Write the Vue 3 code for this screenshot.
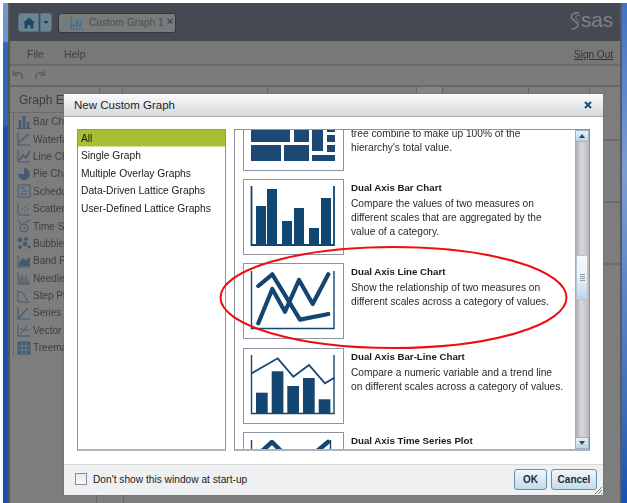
<script setup>
const elements = [
  { name: 'Bar Chart', kind: 'bar' }, { name: 'Waterfall Chart', kind: 'water' },
  { name: 'Line Chart', kind: 'line' }, { name: 'Pie Chart', kind: 'pie' },
  { name: 'Schedule Chart', kind: 'sched' }, { name: 'Scatter Plot', kind: 'scatter' },
  { name: 'Time Series Plot', kind: 'time' }, { name: 'Bubble Plot', kind: 'bubble' },
  { name: 'Band Plot', kind: 'band' }, { name: 'Needle Plot', kind: 'needle' },
  { name: 'Step Plot', kind: 'step' }, { name: 'Series Plot', kind: 'series' },
  { name: 'Vector Plot', kind: 'vector' }, { name: 'Treemap', kind: 'tree' },
]
const categories = ['All', 'Single Graph', 'Multiple Overlay Graphs', 'Data-Driven Lattice Graphs', 'User-Defined Lattice Graphs']
const treeRects = [[0,0,39,12],[43,0,15,12],[61,0,11,21],[76,0,8,2],[76,5,8,7],[76,15,8,7],[0,15,30,16],[33,15,25,16],[61,25,23,6]]
const barRects = [[6,20],[17,3],[32,35],[44,22],[59,42],[71,12]]
const comboRects = [[6,37.7],[21.7,16.3],[37.3,31],[53,23],[68.7,44.3]]
</script>

<template>
  <div class="screen">
    <div class="edge-left"></div>
    <div class="app">
      <header class="masthead">
        <div class="home-group">
          <button class="home-btn">
            <svg width="12" height="12" viewBox="0 0 12 12"><path d="M6 .5 0 6h1.6v5.5h3V8h2.800v3.500h3V6H12z" fill="#1c4464"/></svg>
          </button>
          <button class="home-arrow"><span class="caret"></span></button>
        </div>
        <div class="doc-tab">
          <svg width="14" height="14" viewBox="0 0 14 14" fill="none" stroke="#3f6d96">
            <path d="M1 1v12h12" stroke-width="1.2"/>
            <path d="M4 11V8M7 11V4M10 11V6" stroke-width="2"/>
          </svg>
          <span>Custom Graph 1</span>
          <b>×</b>
        </div>
        <div class="logo">
          <svg width="11" height="18" viewBox="0 0 11 18" fill="none" stroke="#7f848a">
            <path d="M9 1C4 0 0 3 2 6.500L7.500 11.500C9 14 6.500 17 1.500 17" stroke-width="1.400"/>
            <path d="M10 3.500C7 3 5 4.500 6 6.500L9.500 10.500" stroke-width="1"/>
          </svg>
          <span>sas</span>
        </div>
      </header>
      <nav class="menubar">
        <span>File</span><span>Help</span>
        <a>Sign Out</a>
      </nav>
      <div class="toolbar">
        <svg width="34" height="12" viewBox="0 0 34 12" fill="none" stroke="#5e5e5e" stroke-width="1.500">
          <path d="M10 10C11.500 4 6 2 2 5M1.500 1.500v4.500H6"/>
          <path d="M24 10C22.500 4 28 2 32 5M32.500 1.500v4.500H28"/>
        </svg>
      </div>
      <div class="workspace">
        <div class="ticks"><i></i><i></i><i></i><i></i><i class="lit"></i><i></i><i></i></div>
        <div class="work-main">
          <aside class="elements">
            <div class="elements-title">Graph Elements</div>
            <ul class="element-list">
              <li v-for="el in elements" :key="el.name">
                <svg width="14" height="14" viewBox="0 0 14 14" fill="none" stroke="#435a70">
                  <template v-if="el.kind === 'bar'"><path d="M3 13V5M7 13V1M11 13V7" stroke-width="2.600"/><path d="M0 13.500h14" /></template>
                  <template v-else-if="el.kind === 'water'"><path d="M1 1v12h12M3 11V8h3V6h3V3h3" stroke-width="1.100"/></template>
                  <template v-else-if="el.kind === 'line'"><path d="M1 1v12h12" /><path d="M2.500 11 6 6l3 3 4-7" stroke-width="1.600"/></template>
                  <template v-else-if="el.kind === 'pie'"><path d="M7 7V1a6 6 0 1 1-6 6z" fill="#435a70" stroke="none"/><path d="M7 7 2 3" stroke="#7b7b7b"/></template>
                  <template v-else-if="el.kind === 'sched'"><path d="M1 1h12v12H1zM3 4h5M5 7h5M3 10h7"/></template>
                  <template v-else-if="el.kind === 'scatter'"><path d="M1 1v12h12"/><path d="M3 10h1M5 7h1M7 9h1M8 5h1M10 7h1M11 3h1" stroke-width="1.400"/></template>
                  <template v-else-if="el.kind === 'time'"><circle cx="7" cy="9" r="4"/><path d="M1 1l4 5 3-3 5-2M7 7v2h2"/></template>
                  <template v-else-if="el.kind === 'bubble'"><circle cx="3" cy="4" r="2" fill="#435a70"/><circle cx="9" cy="3" r="1.500" fill="#435a70"/><circle cx="8" cy="8" r="2" fill="#435a70"/><circle cx="3" cy="11" r="1.500" fill="#435a70"/><circle cx="12" cy="11" r="1.200" fill="#435a70"/></template>
                  <template v-else-if="el.kind === 'band'"><path d="M1 1v12h12"/><path d="M2 12V8l4-4 3 2 4-3v9z" fill="#435a70" stroke="none"/></template>
                  <template v-else-if="el.kind === 'needle'"><path d="M1 1v12h12M3 13V6M5 13V3M7 13V7M9 13V4M11 13V8"/></template>
                  <template v-else-if="el.kind === 'step'"><path d="M1 1v12h12M2 3h3l6 9"/></template>
                  <template v-else-if="el.kind === 'series'"><path d="M1 1v12h12M2 12l9-10" stroke-width="1.200"/></template>
                  <template v-else-if="el.kind === 'vector'"><path d="M1 1v12h12M3 11l4-4M7 7h5M7 7l3-5M3 5l3 2"/></template>
                  <template v-else><path d="M1 1h12v12H1z" fill="#435a70"/><path d="M1 5h12M1 9h12M5 1v12M9 1v12" stroke="#70808c"/></template>
                </svg>
                <span>{{ el.name }}</span>
              </li>
            </ul>
          </aside>
          <div class="canvas-strip">
            <span class="strip-rule"></span><span class="strip-rule"></span><span class="strip-rule"></span>
          </div>
        </div>
        <div class="ticks low"><i></i><i></i></div>
      </div>
    </div>
    <div class="edge-right"></div>

    <section class="dialog">
      <div class="dialog-title">
        <span>New Custom Graph</span>
        <svg class="close" width="8" height="8" viewBox="0 0 8 8"><path d="M1 1l6 6M7 1 1 7" stroke="#1e4d7b" stroke-width="2"/></svg>
      </div>
      <div class="dialog-body">
        <ul class="categories">
          <li v-for="(c, i) in categories" :key="c" :class="{ selected: i === 0 }">{{ c }}</li>
        </ul>
        <div class="gallery">
          <div class="gallery-view">
            <article class="card first">
              <div class="thumb">
                <svg width="84" height="31" viewBox="0 0 84 31" fill="#1c4a75">
                  <rect v-for="(r, i) in treeRects" :key="i" :x="r[0]" :y="r[1]" :width="r[2]" :height="r[3]"/>
                </svg>
              </div>
              <div class="info">
                <p>tree combine to make up 100% of the hierarchy's total value.</p>
              </div>
            </article>
            <article class="card">
              <div class="thumb">
                <svg width="87" height="60" viewBox="0 0 87 60" fill="#0f4672">
                  <path d="M1.500 0v59H84V0" fill="none" stroke="#0f4672" stroke-width="1.800"/>
                  <rect v-for="(r, i) in barRects" :key="i" :x="r[0]" :y="r[1]" width="10" :height="59 - r[1]"/>
                </svg>
              </div>
              <div class="info">
                <h3>Dual Axis Bar Chart</h3>
                <p>Compare the values of two measures on different scales that are aggregated by the value of a category.</p>
              </div>
            </article>
            <article class="card">
              <div class="thumb">
                <svg width="87" height="60" viewBox="0 0 87 60" fill="none" stroke="#154672">
                  <path d="M1.500 1v57.500H84V1" stroke-width="1.400"/>
                  <path d="M8.300 16 22.300 4.300 50 49.600 78.300 44" stroke-width="4.200" stroke-linecap="round" stroke-linejoin="round"/>
                  <path d="M8.300 53.300 22.300 19 35 41.700 49 10 62.700 34 78.300 4.300" stroke-width="4.200" stroke-linecap="round" stroke-linejoin="round"/>
                </svg>
              </div>
              <div class="info">
                <h3>Dual Axis Line Chart</h3>
                <p>Show the relationship of two measures on different scales across a category of values.</p>
              </div>
            </article>
            <article class="card">
              <div class="thumb">
                <svg width="87" height="60" viewBox="0 0 87 60" fill="#154672">
                  <path d="M1.500 0v58.500H84V0" fill="none" stroke="#154672" stroke-width="1.400"/>
                  <path d="M1.700 18.300 27.700 3.300 43.300 21.700 59 10 75 28.300 84.300 22.700" fill="none" stroke="#154672" stroke-width="1.800"/>
                  <rect v-for="(r, i) in comboRects" :key="i" :x="r[0]" :y="r[1]" width="11.700" :height="58 - r[1]"/>
                </svg>
              </div>
              <div class="info">
                <h3>Dual Axis Bar-Line Chart</h3>
                <p>Compare a numeric variable and a trend line on different scales across a category of values.</p>
              </div>
            </article>
            <article class="card">
              <div class="thumb">
                <svg width="87" height="60" viewBox="0 0 87 60" fill="none" stroke="#154672">
                  <path d="M1.500 1v58M80.500 1v58" stroke-width="1.400"/>
                  <path d="M10 14 22 3 33 14M66 13l12-10" stroke-width="4.500" stroke-linecap="round" stroke-linejoin="round"/>
                </svg>
              </div>
              <div class="info">
                <h3>Dual Axis Time Series Plot</h3>
              </div>
            </article>
          </div>
          <div class="scrollbar">
            <button class="sb-btn"><span class="tri up"></span></button>
            <div class="sb-track">
              <div class="sb-thumb"><span></span></div>
            </div>
            <button class="sb-btn"><span class="tri down"></span></button>
          </div>
        </div>
      </div>
      <footer class="dialog-foot">
        <label class="check"><span class="box"></span>Don't show this window at start-up</label>
        <div class="actions">
          <button class="btn ok">OK</button>
          <button class="btn">Cancel</button>
        </div>
        <svg class="grip" width="7" height="7" viewBox="0 0 7 7"><path d="M0 7 7 0M3 7l4-4M6 7l1-1" stroke="#777"/></svg>
      </footer>
    </section>

    <svg class="annotation" width="627" height="503" viewBox="0 0 627 503" fill="none">
      <ellipse cx="393.500" cy="297.500" rx="173" ry="50.500" stroke="#ee0d12" stroke-width="2"/>
    </svg>
  </div>
</template>

<style>
html, body { margin: 0; background: #fff; }
</style>

<style scoped>
* { box-sizing: border-box; }
.screen {
  position: relative; width: 627px; height: 503px; overflow: hidden; background: #fff;
  display: flex; padding-left: 3px; padding-top: 3px;
  font-family: "Liberation Sans", Arial, sans-serif; font-size: 10.2px; color: #222;
}
.edge-left {
  width: 5px; height: 500px; flex: none;
  background: linear-gradient(#7396cf, #6f93cd 38px, #2c66bd 40px, #2c66bd 122px, #1552b4 124px, #1552b4);
}
.edge-right {
  width: 5px; height: 500px; flex: none;
  background: linear-gradient(#3f72c4, #7c9dd3 170px, #3f6fbc 400px, #1552b4);
}
.app {
  flex: 1; min-width: 0; display: flex; flex-direction: column; filter: blur(.45px);
  border-left: 2px solid #555; border-right: 2px solid #5a5a5a;
}
.masthead {
  height: 38px; background: #454a52; display: flex; align-items: center; padding: 0 7px 0 8px; flex: none;
}
.home-group { display: flex; gap: 1px; margin-right: 6px; margin-top: 1px; }
.home-btn, .home-arrow {
  height: 19px; border: 1px solid #58707f; background: #6b8493; padding: 0;
  display: flex; align-items: center; justify-content: center;
}
.home-btn { width: 21px; border-radius: 3px 0 0 3px; }
.home-arrow { width: 12px; border-radius: 0 3px 3px 0; }
.caret { border: 3px solid transparent; border-top: 3px solid #1c4464; border-bottom: 0; }
.doc-tab {
  height: 20px; width: 118px; border: 1px solid #35383d; border-radius: 3px; background: #787b7c;
  display: flex; align-items: center; gap: 5px; padding-left: 11px; color: #4b4f52; font-size: 10.2px; margin-top: 1px;
}
.doc-tab b { color: #274e70; font-size: 11px; margin-left: -2px; margin-top: -3px; }
.logo {
  margin-left: auto; color: #7f848a; font-size: 21px; letter-spacing: -.2px; line-height: 1;
  display: flex; align-items: center; margin-top: -2px;
}
.logo span { margin-top: -3px; }
.menubar {
  height: 25px; background: #787878; flex: none; display: flex; align-items: center; gap: 20px;
  padding: 3px 7px 0 17px; color: #3f3f3f; border-bottom: 2px solid #6a6a6a; font-size: 10.5px;
}
.menubar a { margin-left: auto; text-decoration: underline; color: #333; font-size: 10px; }
.toolbar {
  height: 21px; background: #7c7c7c; flex: none; border-bottom: 2px solid #686868;
  padding: 3px 0 0 2px; display: flex;
}
.workspace { flex: 1; min-height: 0; display: flex; flex-direction: column; background: #7d7d7d; }
.ticks { flex: none; height: 7px; display: grid; grid-template-columns: 90px 23px 145px 149px 26px 86px 61px; }
.ticks i { display: block; border-right: 1px solid #666; }
.ticks i.lit { background: #858585; }
.ticks.low { height: 9px; grid-template-columns: 87px 27px; }
.work-main { flex: 1; min-height: 0; display: flex; }
.elements { width: 200px; flex: none; }
.elements-title {
  height: 19px; line-height: 13px; padding-left: 9px; font-size: 12px; color: #3c3c3c; border-bottom: 1px solid #6a6a6a;
}
.element-list { list-style: none; margin: 0 0 0 3px; padding: 0 0 0 3px; border-left: 1px solid #6a6a6a; }
.element-list li {
  height: 17.400px; display: flex; align-items: center; gap: 2px; color: #3f3f3f; font-size: 10px; white-space: nowrap;
}
.element-list svg { flex: none; }
.canvas-strip { flex: 1; display: flex; flex-direction: column; padding-top: 45px; gap: 60px; }
.strip-rule { display: block; height: 2px; background: #6c6c6c; }

.dialog {
  position: absolute; left: 64px; top: 94px; width: 539px; height: 401px; background: #fff;
  display: flex; flex-direction: column; box-shadow: 0 0 1px #555; filter: blur(.25px);
}
.dialog-title {
  height: 23px; flex: none; background: linear-gradient(#fbfbfc, #d6d8dc);
  border-bottom: 1px solid #a9abb0; padding: 0 11px 0 10px; display: flex; align-items: center;
  justify-content: space-between; font-size: 11.5px; color: #1c1c1c;
}
.dialog-body { flex: 1; min-height: 0; display: flex; gap: 8px; padding: 12px 13px 13px; }
.categories {
  width: 149px; flex: none; margin: 0; padding: 0; list-style: none;
  border: 1px solid #8b929d; border-bottom-width: 2px; border-bottom-color: #b0b4ba;
}
.categories li { height: 17.400px; line-height: 18.400px; padding-left: 3px; color: #1a1a1a; font-size: 10.25px; }
.categories li.selected { background: #a9be33; border-bottom: 1px solid #dbe29a; }
.gallery {
  width: 356px; flex: none; display: flex; border: 1px solid #8b929d; border-bottom-width: 2px; border-bottom-color: #b0b4ba;
  overflow: hidden;
}
.gallery-view { flex: 1; min-width: 0; overflow: hidden; padding: 0 0 0 8px; }
.card { display: flex; gap: 7px; height: 84.250px; }
.card.first { height: 49px; }
.card.first .thumb { height: 40.500px; border-top: 0; padding: 0 0 0 7px; }
.card.first .info { margin-top: -3px; }
.card.first p { line-height: 14.200px; }
.thumb {
  width: 101px; height: 76px; flex: none; border: 1px solid #8d94a0; display: flex;
  justify-content: flex-start; align-items: flex-start; padding: 6px 0 0 6px; overflow: hidden;
}
.info { flex: 1; min-width: 0; }
.info h3 { margin: 2px 0 3px; font-size: 9.700px; line-height: 13px; font-weight: bold; color: #1a1a1a; }
.info p { margin: 0; max-width: 213px; color: #2a2a2a; font-size: 10.2px; line-height: 14px; }
.scrollbar { width: 14px; flex: none; display: flex; flex-direction: column; background: linear-gradient(90deg, #a4a6a9, #d8d9db 45%, #b8babd); }
.sb-btn {
  height: 12px; padding: 0; flex: none; background: linear-gradient(#eaf2f8, #bcd3e4);
  display: flex; align-items: center; justify-content: center; border: 1px solid #9eb2c2;
}
.tri { border: 3px solid transparent; border-top-width: 0; border-bottom: 4px solid #1d4a75; }
.tri.down { border-bottom: 0; border-top: 4px solid #1d4a75; }
.sb-track { flex: 1; padding-top: 113px; }
.sb-thumb {
  height: 45px; margin-left: 1px; width: 12px; border: 1px solid #b5c4d0; border-radius: 1px;
  background: linear-gradient(#f6f9fb, #e8eff5 55%, #bcd4e8);
  display: flex; align-items: center; justify-content: center;
}
.sb-thumb span { width: 5px; height: 7px; background: repeating-linear-gradient(#8e9aa3 0 1px, transparent 1px 2px); }
.dialog-foot {
  height: 31px; flex: none; background: #eff0f2; border-top: 1px solid #d9dadc; position: relative;
  display: flex; align-items: center; justify-content: space-between; padding: 0 6px 2px 11px;
}
.check { display: flex; align-items: center; gap: 6px; color: #222; font-size: 10.2px; }
.box { width: 12px; height: 12px; border: 1px solid #888e96; background: linear-gradient(#e9eaec, #fafafa); }
.actions { display: flex; gap: 4px; }
.btn {
  height: 21px; width: 46px; font: bold 10px "Liberation Sans", Arial, sans-serif; color: #1c2c3a; padding: 0;
  border: 1px solid #5f91b3; border-radius: 3px; background: linear-gradient(#f1f6fa, #c6dbe9);
}
.btn.ok { width: 33px; }
.grip { position: absolute; right: 1px; bottom: 1px; }
.annotation { position: absolute; left: 0; top: 0; pointer-events: none; }
</style>
